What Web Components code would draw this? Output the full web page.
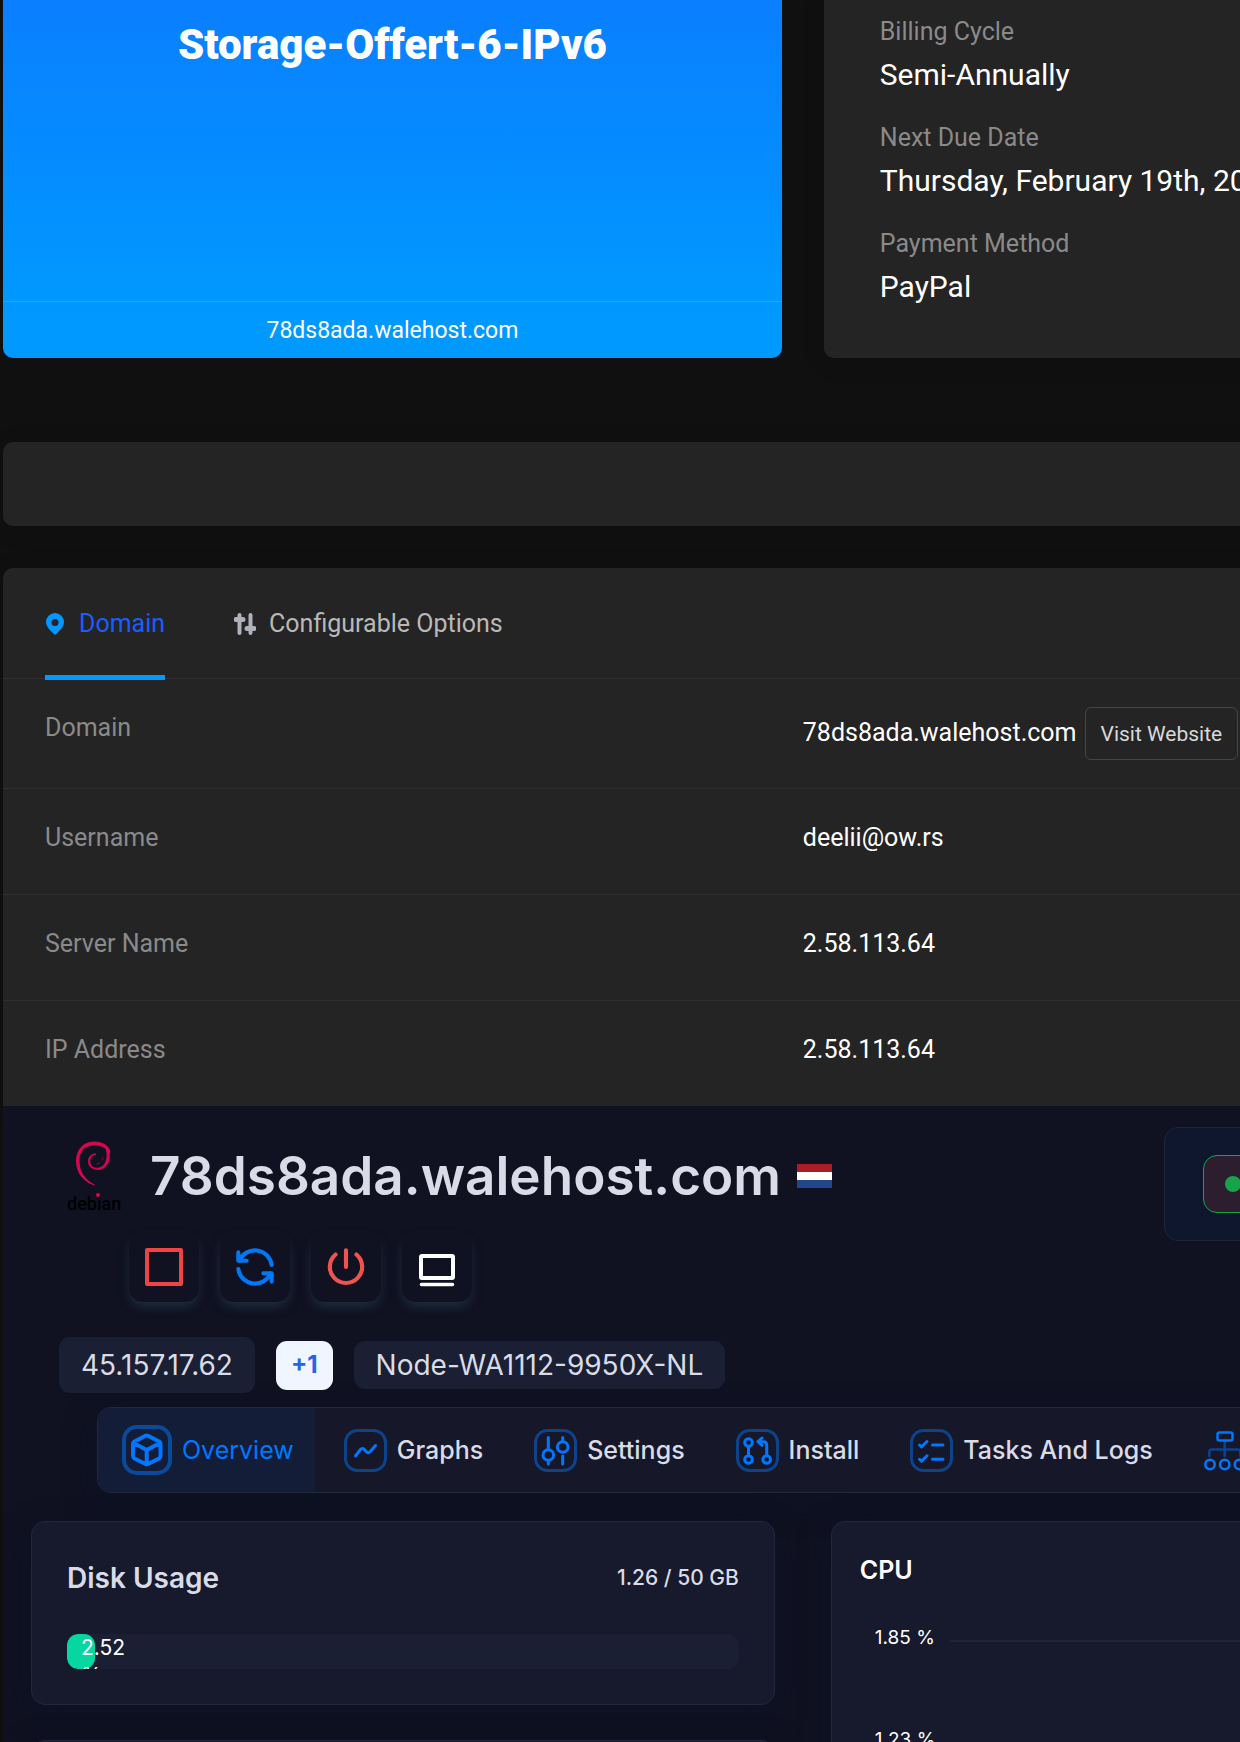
<!DOCTYPE html>
<html lang="en">
<head>
<meta charset="utf-8">
<meta name="viewport" content="width=device-width, initial-scale=1">
<title>Service details</title>
<style>
  html, body { margin: 0; height: 100%; }
  body { background: #101010; color: #fff; font: 25px/42px Roboto, sans-serif; overflow: hidden; }
</style>
</head>
<body>
<service-page></service-page>
<script>
const define = (name, html, setup) => {
  const template = document.createElement('template');
  template.innerHTML = '<style>*{box-sizing:border-box}:host{display:block;box-sizing:border-box}</style>' + html;
  customElements.define(name, class extends HTMLElement {
    constructor() {
      super();
      this.attachShadow({ mode: 'open' }).append(template.content.cloneNode(true));
    }
    connectedCallback() { if (setup) setup(this, this.shadowRoot); }
  });
};

/* Stroke icons; "frame" is the rounded outline drawn round most of the navigation icons. */
const frame = '<rect x="1.5" y="1.5" width="40" height="40" rx="12" stroke-opacity=".45"/>';
const icons = {
  pin: [18, 22, '<path fill="#0099ff" stroke="none" fill-rule="evenodd" d="M9 0a9 9 0 0 1 9 9c0 5-5 9-9 13C5 18 0 14 0 9a9 9 0 0 1 9-9Zm0 6a3.500 3.500 0 1 0 0 7 3.500 3.500 0 0 0 0-7Z"/>'],
  sliders: [22, 22, '<path d="M5.500 2v18M16.500 2v18" stroke-width="4"/><path d="M2 6.500h7M13 15.500h7" stroke-width="5"/>'],
  stop: [50, 50, '<rect x="8" y="8" width="34" height="34" stroke-width="4"/>'],
  refresh: [50, 50, '<path transform="scale(2.083)" stroke-width="2" d="M20 11A8.100 8.100 0 0 0 4.500 9M4 5v4h4M4 13a8.100 8.100 0 0 0 15.500 2m.5 4v-4h-4"/>'],
  power: [50, 50, '<path transform="scale(2.083)" stroke-width="2" d="M7 6a7.750 7.750 0 1 0 10 0M12 4v8"/>'],
  console: [50, 50, '<path stroke-width="4" d="M10 14h30a1 1 0 0 1 1 1v20a1 1 0 0 1-1 1H10a1 1 0 0 1-1-1V15a1 1 0 0 1 1-1Z"/><path stroke-width="3.500" d="M9.500 42.500h31"/>'],
  overview: [50, 50, '<rect x="2" y="2" width="46" height="46" rx="13" stroke-opacity=".5" stroke-width="4"/><path stroke-width="4" d="M23.500 10.700 12.500 16.500q-1.500 1-1.500 2.500v12q0 1.500 1.500 2.500l11 5.500q1.200.6 2.500 0l11-5.500q1.500-1 1.500-2.500V19q0-1.500-1.500-2.500l-11-5.800q-1.300-.6-2.500 0ZM11.500 18l13.200 7L38 18M24.700 25v14"/>'],
  graphs: [43, 43, frame + '<path d="m11.500 27 5-6.500q1.800-2 3.600-.2l2.400 2.600q1.800 1.800 3.600-.2l5.400-6.200"/>'],
  settings: [43, 43, frame + '<path d="M14.300 8.500V20M14.300 32v3M28.700 8.500V12M28.700 27v8"/><circle cx="14.300" cy="26" r="5.300"/><circle cx="28.700" cy="18" r="5.300"/>'],
  install: [43, 43, frame + '<circle cx="12.500" cy="13.500" r="3.800"/><circle cx="12.500" cy="30.500" r="3.800"/><circle cx="30.700" cy="30.500" r="3.800"/><path d="M12.500 18v8M30.700 26V16q0-3.300-3.300-3.300H22M26 9l-4 3.700 4 3.600"/>'],
  tasks: [43, 43, frame + '<path d="m9.500 16 2 2 5.500-5.500M22.500 16H33M9.500 30.300l2 2 5.500-5.500M22.500 30.300H33"/>'],
  network: [43, 43, '<path stroke-opacity=".45" stroke-width="2.500" d="M20.700 13v14M5.300 27v-4q0-2.500 2.500-2.500h26q2.500 0 2.500 2.500v4"/><g stroke-width="2.500"><rect x="13.500" y="3.500" width="15" height="8" rx="2"/><circle cx="6" cy="35.500" r="4.700"/><circle cx="20.700" cy="35.500" r="4.700"/><circle cx="35.400" cy="35.500" r="4.700"/></g>']
};
define('ui-icon', '<style>:host{display:inline-flex;flex:none}svg{display:block}</style><span></span>', (el, root) => {
  const [w, h, body] = icons[el.getAttribute('name')];
  root.querySelector('span').innerHTML = `<svg width="${w}" height="${h}" viewBox="0 0 ${w} ${h}" fill="none" stroke="currentColor" stroke-width="3" stroke-linecap="round" stroke-linejoin="round" aria-hidden="true">${body}</svg>`;
});
const addIcon = (el, root) => {
  const icon = document.createElement('ui-icon');
  icon.setAttribute('name', el.getAttribute('icon'));
  root.querySelector('a').prepend(icon);
};

define('surface-card', `<style>:host{background:#242424;border-radius:10px;box-shadow:0 4px 24px rgba(0,0,0,.12)}</style><slot></slot>`);

define('product-banner', `<style>
  :host{display:flex;flex-direction:column;border-radius:0 0 10px 10px;text-align:center;background:linear-gradient(#0a7fff,#0099ff 88%)}
  h1{margin:0;padding-top:19px;flex:1;font-size:42px;line-height:52px;font-weight:900}
  footer{border-top:1px solid rgba(255,255,255,.14);font-size:23px;line-height:42px;padding:8px 0 6px}
</style><h1><slot></slot></h1><footer><slot name="domain"></slot></footer>`);

define('info-item', `<style>:host{white-space:nowrap}.l{color:#8a8a8a}.v{font-size:30px;line-height:43px}</style>
  <div class="l"><slot name="label"></slot></div><div class="v"><slot></slot></div>`);

define('detail-tab', `<style>
  :host{display:flex}
  a{display:flex;align-items:center;color:#b9b9b9;text-decoration:none;height:112px;border-bottom:5px solid transparent;padding-top:5px}
  ui-icon{color:#b0b1bd;margin-right:13px}
  :host([active]) a{color:#1a5eff;border-color:#0099ff}
  :host([active]) ui-icon{margin:0 15px 0 1px}
</style><a href="#"><slot></slot></a>`, addIcon);

define('detail-row', `<style>
  :host{display:grid;grid-template-columns:1fr 1fr;padding:28px 42px 35px;border-top:1px solid #2f2f2f}
  :host([action]){padding-bottom:28px}
  .l{color:#8a8a8a}
  .v{display:flex;align-items:baseline;gap:8px}
</style><div class="l"><slot name="label"></slot></div><div class="v"><slot></slot></div>`);

define('outline-button', `<style>
  button{height:53px;padding:0 15px;border:1px solid #454545;border-radius:6px;background:none;color:#d9d9d9;font:21px/42px Roboto,sans-serif}
</style><button type="button"><slot></slot></button>`);

define('service-details', `<style>
  surface-card{border-radius:10px 10px 0 0}
  nav{display:flex;gap:69px;padding:0 42px;height:110px;position:relative}
</style>
<surface-card>
  <nav><detail-tab active icon="pin">Domain</detail-tab><detail-tab icon="sliders">Configurable Options</detail-tab></nav>
  <detail-row action><span slot="label">Domain</span><span>78ds8ada.walehost.com</span><outline-button>Visit Website</outline-button></detail-row>
  <detail-row><span slot="label">Username</span>deelii@ow.rs</detail-row>
  <detail-row><span slot="label">Server Name</span>2.58.113.64</detail-row>
  <detail-row><span slot="label">IP Address</span>2.58.113.64</detail-row>
</surface-card>`);

define('debian-logo', `<style>
  :host{width:54px;height:70px;flex:none}
  svg{display:block;overflow:visible}
</style>
<svg width="54" height="70" viewBox="0 0 54 70" role="img" aria-label="debian">
  <path fill="#d70751" stroke="#d70751" stroke-width=".9" stroke-linejoin="round" d="M43 11C42 5 36 1 27 1 16 1 9.500 9 9.500 20c0 12 7 20.500 18 24C18 39 12 31 12 20 12 10 17 5 26 4c6-.3 11 1.500 13 4 2 5 1.500 12-2.500 16.500-4 4-11 3.500-13-1-2-5 0-9 5.500-10.500-5-.5-8 3.500-7.500 8.500.5 6 9 9 15 5.500C41.500 23 43 18 42 13Z"/>
  <path fill="none" stroke="#d70751" stroke-width=".7" stroke-linecap="round" d="m30 23 2-1m3-3 1-2"/>
  <text x="0" y="69" fill="#000" font-family="Roboto, sans-serif" font-weight="500" font-size="18">debian</text>
  <circle cx="31" cy="54" r="2" fill="#d70751"/>
</svg>`);

define('nl-flag', `<style>:host{width:35px;height:24px;background:linear-gradient(#ae1c28 33.300%,#fff 33.300% 66.600%,#21468b 66.600%)}</style>`);

define('action-button', `<style>
  button{display:grid;place-items:center;width:70px;height:70px;padding:0;border:0;border-radius:14px;background:#101121;color:inherit;box-shadow:0 6px 12px -2px rgba(46,76,92,.55)}
</style><button type="button"><slot></slot></button>`, (el, root) =>
  root.querySelector('button').setAttribute('aria-label', el.getAttribute('label')));

define('info-chip', `<style>
  :host{padding:3px 22px;border-radius:11px;background:#1b1f34;font-size:28px;line-height:42px}
  :host([large]){padding:7px 22px}
  :host([count]){padding:3px 15px 4px;background:#eff6ff;color:#2563eb;font-size:24px;font-weight:700}
</style><slot></slot>`);

define('status-card', `<style>
  :host{padding:27px 38px;border:1px solid #1f2735;border-radius:14px;background:#0f172e}
  div{display:flex;align-items:center;height:58px;padding:0 21px;border:1px solid #16a34a;border-radius:14px;background:#2c1e2e}
  i{width:16px;height:16px;border-radius:50%;background:#16a34a}
</style><div><i></i></div>`);

define('server-header', `<style>
  :host{display:flex;align-items:flex-start;justify-content:space-between;padding:21px 28px 0}
  .main{padding-top:14px}
  .name{display:flex;align-items:center;height:70px;padding-left:36px}
  h2{margin:0 16px 0 29px;font-size:53px;line-height:64px;font-weight:600}
  .actions{display:flex;gap:21px;padding:21px 0 35px 98px}
  .chips{display:flex;align-items:center;gap:21px;padding-left:28px}
  status-card{flex:0 0 411px}
</style>
<div class="main">
  <div class="name"><debian-logo></debian-logo><h2>78ds8ada.walehost.com</h2><nl-flag role="img" aria-label="Netherlands"></nl-flag></div>
  <div class="actions">
    <action-button label="Stop" style="color:#ef4444"><ui-icon name="stop"></ui-icon></action-button>
    <action-button label="Restart" style="color:#0077f5"><ui-icon name="refresh"></ui-icon></action-button>
    <action-button label="Power off" style="color:#ee5350"><ui-icon name="power"></ui-icon></action-button>
    <action-button label="Console" style="color:#fff"><ui-icon name="console"></ui-icon></action-button>
  </div>
  <div class="chips"><info-chip large>45.157.17.62</info-chip><info-chip count>+1</info-chip><info-chip>Node-WA1112-9950X-NL</info-chip></div>
</div>
<status-card></status-card>`);

define('nav-tab', `<style>
  a{display:flex;align-items:center;gap:10px;height:84px;padding:0 22px 0 29px;color:inherit;text-decoration:none;font-size:25px;font-weight:500;white-space:nowrap}
  ui-icon{color:#0077ff}
  :host([active]){background:#131d37;color:#0077ff;border-radius:13px 0 0 13px}
  :host([active]) a{padding:0 21px 0 24px;font-weight:400}
</style><a href="#"><slot></slot></a>`, (el, root) => {
  addIcon(el, root);
  if (el.hasAttribute('label')) root.querySelector('a').setAttribute('aria-label', el.getAttribute('label'));
});

define('server-nav', `<style>
  :host{margin:14px 94px 28px;border:1px solid #232837;border-radius:14px;background:#16182a;box-shadow:0 10px 30px rgba(12,20,38,.6)}
  nav{display:flex}
</style><nav>
  <nav-tab active icon="overview">Overview</nav-tab><nav-tab icon="graphs">Graphs</nav-tab><nav-tab icon="settings">Settings</nav-tab>
  <nav-tab icon="install">Install</nav-tab><nav-tab icon="tasks">Tasks And Logs</nav-tab><nav-tab icon="network" label="Network"></nav-tab>
</nav>`);

define('metric-card', `<style>
  :host{border:1px solid #24273b;border-radius:14px;background:#17192c;box-shadow:0 10px 30px rgba(12,20,38,.6);padding:35px}
  :host([chart]){padding:28px}
</style><slot></slot>`);

define('usage-meter', `<style>
  header{display:flex;justify-content:space-between;align-items:center;margin-bottom:35px}
  h3{margin:0;font-size:28px;font-weight:600}
  header span{font-size:21px;font-weight:500}
  .bar{height:35px;border-radius:11px;background:#1b1f34;overflow:hidden}
  .fill{width:2.520%;height:35px;padding:0 14px;border-radius:11px;background:#06d6a0;color:#fff;font-size:21px;line-height:28px}
</style>
<header><h3><slot></slot></h3><span><slot name="amount"></slot></span></header>
<div class="bar" role="progressbar" aria-label="Disk usage" aria-valuenow="2.52"><div class="fill">2.52 %</div></div>`);

define('cpu-chart', `<style>
  :host{color:#fff}
  h3{margin:0 0 36px;font-size:25px;line-height:40px;font-weight:600}
  .tick{display:flex;align-items:center;height:24px;margin-bottom:78px;padding-left:15px;font-size:19px;line-height:24px;white-space:nowrap}
  .tick span{flex:0 0 75px}
  .tick::after{content:"";flex:1;height:2px;margin-top:6px;background:#212437}
</style><h3>CPU</h3><div class="tick"><span>1.85 %</span></div><div class="tick"><span>1.23 %</span></div>`);

define('server-panel', `<style>
  :host{background:#101121;color:#d9dce6;font-family:Inter,sans-serif}
  .grid{display:grid;grid-template-columns:1fr 1fr;gap:56px;padding:0 28px}
  .col{display:flex;flex-direction:column;gap:35px}
</style>
<server-header></server-header><server-nav></server-nav>
<div class="grid">
  <div class="col"><metric-card><usage-meter>Disk Usage<span slot="amount">1.26 / 50 GB</span></usage-meter></metric-card><metric-card></metric-card></div>
  <metric-card chart><cpu-chart></cpu-chart></metric-card>
</div>`);

define('service-page', `<style>
  :host{width:129vw;margin-left:3px}
  .top{display:grid;grid-template-columns:1fr 1fr;gap:42px;margin-bottom:84px}
  .top surface-card{border-radius:0 0 10px 10px}
  .info{display:flex;flex-direction:column;gap:21px;padding:11px 56px 50px}
  .notice{height:84px;margin-bottom:42px}
</style>
<div class="top">
  <product-banner>Storage-Offert-6-IPv6<span slot="domain">78ds8ada.walehost.com</span></product-banner>
  <surface-card><div class="info">
    <info-item><span slot="label">Billing Cycle</span>Semi-Annually</info-item>
    <info-item><span slot="label">Next Due Date</span>Thursday, February 19th, 2026</info-item>
    <info-item><span slot="label">Payment Method</span>PayPal</info-item>
  </div></surface-card>
</div>
<surface-card class="notice"></surface-card>
<service-details></service-details>
<server-panel></server-panel>`);
</script>
</body>
</html>
